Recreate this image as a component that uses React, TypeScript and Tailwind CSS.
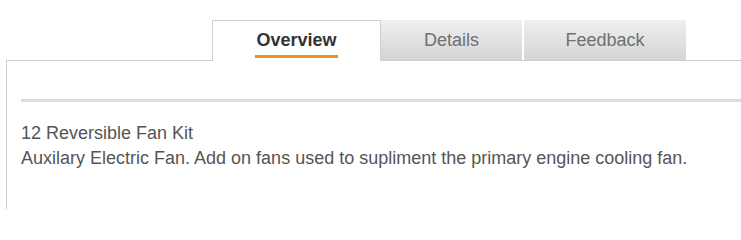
export default function App() {
  return (
    <div className="w-[741px] h-[209px] bg-white overflow-hidden font-['Liberation_Sans',Arial,sans-serif]">
      {/* Tabs */}
      <div className="flex items-end pt-[20px] pl-[212px] relative z-10">
        <div className="w-[169px] h-[41px] bg-white border border-b-0 border-[#cfcfcf] flex flex-col items-center pt-[10px]">
          <span className="text-[18px] leading-[18px] font-bold text-[#333]">Overview</span>
          <span className="mt-[6px] w-[83px] h-[3px] bg-[#f39019]" />
        </div>
        <div className="w-[141px] h-[41px] bg-gradient-to-b from-[#f0f0f0] to-[#d2d4d6] border-b border-[#cfcfcf] flex items-center justify-center">
          <span className="text-[18px] leading-[18px] text-[#707070]">Details</span>
        </div>
        <div className="w-[2px] h-[41px] border-b border-[#cfcfcf]" />
        <div className="w-[162px] h-[41px] bg-gradient-to-b from-[#f0f0f0] to-[#d2d4d6] border-b border-[#cfcfcf] flex items-center justify-center">
          <span className="text-[18px] leading-[18px] text-[#707070]">Feedback</span>
        </div>
      </div>

      {/* Panel */}
      <div className="ml-[6px] -mt-px h-[150px] border-l border-t border-[#cfcfcf] pt-[38px] pl-[14px]">
        <div className="h-[3px] bg-[#dcdcdc]" />
        <div className="mt-[19px] text-[18px] leading-[25px] text-[#555]">
          <p>12 Reversible Fan Kit</p>
          <p>Auxilary Electric Fan. Add on fans used to supliment the primary engine cooling fan.</p>
        </div>
      </div>
    </div>
  );
}
